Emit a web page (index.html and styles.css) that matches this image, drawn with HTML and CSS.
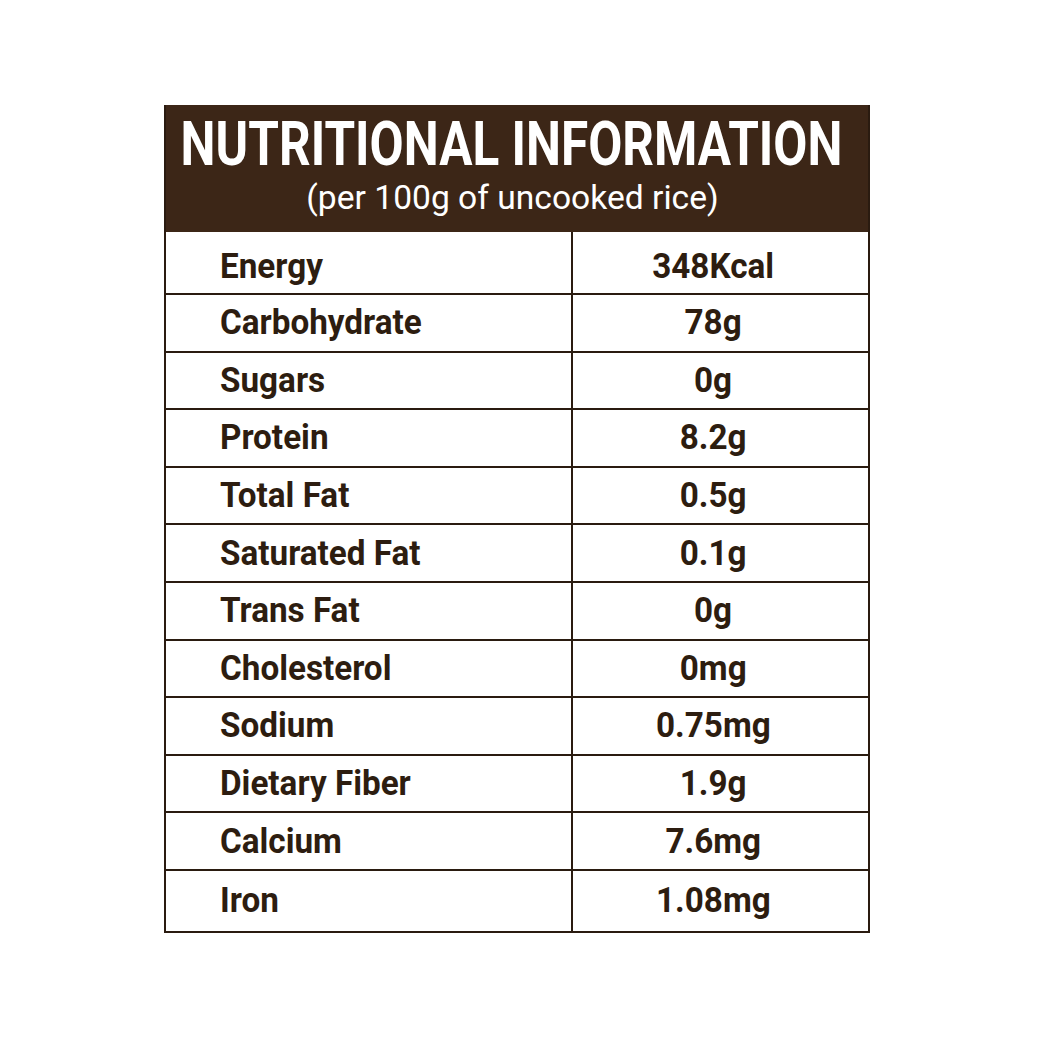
FILE: index.html
```html
<!DOCTYPE html>
<html>
<head>
<meta charset="utf-8">
<link rel="stylesheet" href="styles.css">
</head>
<body>
<div class="panel">
  <div class="head">
    <div class="title"><span>NUTRITIONAL INFORMATION</span></div>
    <div class="sub"><span>(per 100g of uncooked rice)</span></div>
  </div>
  <div class="row first"><div class="k"><span>Energy</span></div><div class="v"><span>348Kcal</span></div></div>
  <div class="row"><div class="k"><span>Carbohydrate</span></div><div class="v"><span>78g</span></div></div>
  <div class="row"><div class="k"><span>Sugars</span></div><div class="v"><span>0g</span></div></div>
  <div class="row"><div class="k"><span>Protein</span></div><div class="v"><span>8.2g</span></div></div>
  <div class="row"><div class="k"><span>Total Fat</span></div><div class="v"><span>0.5g</span></div></div>
  <div class="row"><div class="k"><span>Saturated Fat</span></div><div class="v"><span>0.1g</span></div></div>
  <div class="row"><div class="k"><span>Trans Fat</span></div><div class="v"><span>0g</span></div></div>
  <div class="row"><div class="k"><span>Cholesterol</span></div><div class="v"><span>0mg</span></div></div>
  <div class="row"><div class="k"><span>Sodium</span></div><div class="v"><span>0.75mg</span></div></div>
  <div class="row"><div class="k"><span>Dietary Fiber</span></div><div class="v"><span>1.9g</span></div></div>
  <div class="row"><div class="k"><span>Calcium</span></div><div class="v"><span>7.6mg</span></div></div>
  <div class="row last"><div class="k"><span>Iron</span></div><div class="v"><span>1.08mg</span></div></div>
</div>
</body>
</html>
```
FILE: styles.css
```css
html, body { margin: 0; padding: 0; background: #fff; }
body { font-family: Roboto, "Liberation Sans", sans-serif; }
.panel {
  margin: 105px 0 0 164px;
  width: 702px;
  border: 2px solid #2a1b10;
  border-top: 0;
}
.head {
  background: #3c2617;
  color: #fff;
  height: 127px;
  box-sizing: border-box;
  padding-top: 6px;
  white-space: nowrap;
}
.title, .sub { display: flex; justify-content: center; }
.title { font-weight: 700; font-size: 61px; line-height: 66px; padding-right: 12px; }
.title span { display: inline-block; transform: scaleX(0.812); transform-origin: center; }
.sub { font-weight: 400; font-size: 33px; line-height: 42px; padding-right: 9px; }
.sub span { display: inline-block; transform: scaleX(1.018); transform-origin: center; }
.row {
  display: grid;
  grid-template-columns: 407px 1fr;
  height: 57.6px;
  border-top: 2px solid #2a1b10;
  box-sizing: border-box;
  color: #2d1d10;
  font-weight: 700;
  font-size: 35px;
  white-space: nowrap;
}
.row.first { height: 61px; border-top-width: 0; }
.row.first .k, .row.first .v { padding-top: 8px; }
.row.last { height: 62px; }
.k, .v { display: flex; align-items: center; }
.k { padding-left: 54px; border-right: 2px solid #2a1b10; }
.k span { display: inline-block; transform: scaleX(0.95); transform-origin: left center; }
.v { justify-content: center; padding-right: 14px; }
.v span { display: inline-block; transform: scaleX(0.95); transform-origin: center; }
```
